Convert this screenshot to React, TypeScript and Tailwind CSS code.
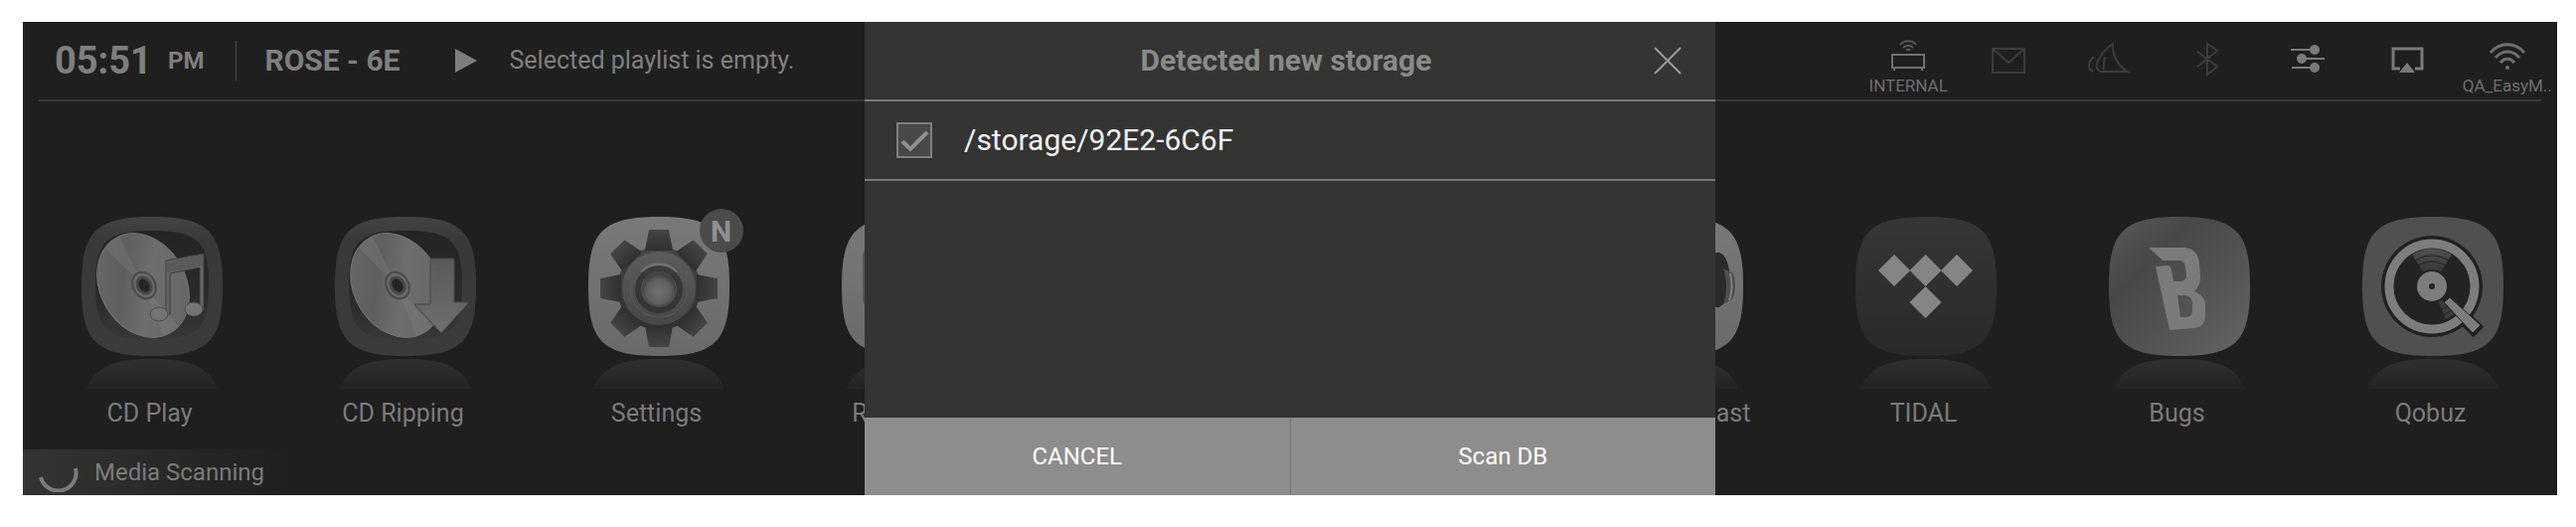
import * as React from 'react';
import clsx from 'clsx';

const SQUIRCLE = 'M0 70C0 16 13 0 71 0C129 0 142 16 142 70C142 124 129 140 71 140C13 140 0 124 0 70Z';

const Gradients = () => (
  <svg className="absolute w-0 h-0" aria-hidden="true">
    <defs>
      <linearGradient id="reflection" x1="0" y1="0" x2="0" y2="1">
        <stop offset="0" stopColor="#30302f" />
        <stop offset="1" stopColor="#232322" />
      </linearGradient>
      <linearGradient id="recess" x1="0" y1="0" x2="0" y2="1">
        <stop offset="0" stopColor="#242423" />
        <stop offset="0.6" stopColor="#2a2a29" />
        <stop offset="1" stopColor="#383836" />
      </linearGradient>
      <linearGradient id="frame" x1="0" y1="0" x2="0" y2="1">
        <stop offset="0" stopColor="#444442" />
        <stop offset="0.15" stopColor="#393937" />
        <stop offset="1" stopColor="#3b3b39" />
      </linearGradient>
      <linearGradient id="disc" x1="0" y1="0" x2="1" y2="1">
        <stop offset="0" stopColor="#6b6b69" />
        <stop offset="0.35" stopColor="#5f5f5d" />
        <stop offset="0.55" stopColor="#6e6e6c" />
        <stop offset="1" stopColor="#636361" />
      </linearGradient>
      <linearGradient id="metal" x1="0" y1="0" x2="0" y2="1">
        <stop offset="0" stopColor="#5a5a58" />
        <stop offset="1" stopColor="#6e6e6c" />
      </linearGradient>
      <linearGradient id="light" x1="0" y1="0" x2="0" y2="1">
        <stop offset="0" stopColor="#797977" />
        <stop offset="1" stopColor="#6a6a68" />
      </linearGradient>
      <linearGradient id="tidal" x1="0" y1="0" x2="0" y2="1">
        <stop offset="0" stopColor="#363634" />
        <stop offset="1" stopColor="#292929" />
      </linearGradient>
      <linearGradient id="bugs" x1="0" y1="0" x2="1" y2="1">
        <stop offset="0" stopColor="#5a5a59" />
        <stop offset="0.3" stopColor="#484847" />
        <stop offset="0.6" stopColor="#535352" />
        <stop offset="1" stopColor="#656564" />
      </linearGradient>
      <linearGradient id="gear" x1="0" y1="0" x2="0" y2="1">
        <stop offset="0" stopColor="#454543" />
        <stop offset="1" stopColor="#30302f" />
      </linearGradient>
      <linearGradient id="ring" x1="0" y1="0" x2="0" y2="1">
        <stop offset="0" stopColor="#5c5c5a" />
        <stop offset="1" stopColor="#464644" />
      </linearGradient>
      <radialGradient id="knob" cy="0.6">
        <stop offset="0" stopColor="#727270" />
        <stop offset="0.7" stopColor="#5f5f5d" />
        <stop offset="1" stopColor="#444442" />
      </radialGradient>
      <linearGradient id="vinyl" x1="0" y1="0" x2="0" y2="1">
        <stop offset="0" stopColor="#505050" />
        <stop offset="1" stopColor="#232323" />
      </linearGradient>
    </defs>
  </svg>
);

const TileIcon = ({ fill, children }: { fill: string; children?: React.ReactNode }) => (
  <svg className="block w-[146px] h-[176px]" viewBox="0 0 146 176" aria-hidden="true">
    <g transform="translate(4 0)">
      <path d="M5 173C14 150 34 143 71 143C108 143 128 150 137 173Z" fill="url(#reflection)" />
      <path d={SQUIRCLE} fill={fill} />
      {children}
    </g>
  </svg>
);

const Disc = () => (
  <>
    <path
      d="M14 68C14 24 26 14 71 14C116 14 128 24 128 68C128 114 116 124 71 124C26 124 14 114 14 68Z"
      fill="url(#recess)"
    />
    <g transform="rotate(-30 62 69)">
      <ellipse cx="62" cy="69" rx="43" ry="55" fill="url(#disc)" stroke="#747472" strokeWidth="1" />
      <path d="M62 69L48 18A43 55 0 0 1 66 14Z" fill="#737371" opacity="0.5" />
      <path d="M62 69L72 122A43 55 0 0 1 54 123Z" fill="#7a7a78" opacity="0.5" />
    </g>
    <g transform="rotate(-30 63 69)">
      <ellipse cx="63" cy="69" rx="11" ry="14" fill="#6a6a68" stroke="#4a4a49" strokeWidth="2" />
      <ellipse cx="63" cy="69" rx="8" ry="10" fill="#484847" />
      <ellipse cx="63" cy="69" rx="5" ry="7" fill="#252524" />
    </g>
  </>
);

const CdPlayIcon = () => (
  <TileIcon fill="url(#frame)">
    <Disc />
    <path d="M85 44L123 37V94H119V51L89 57V98H85Z" fill="#666664" stroke="#3c3c3b" strokeWidth="1" />
    <path d="M86 45L122 38V49L86 56Z" fill="#5a5a58" />
    <ellipse cx="78" cy="98" rx="9" ry="7" fill="#747472" stroke="#4a4a49" />
    <ellipse cx="113" cy="93" rx="9" ry="7" fill="#747472" stroke="#4a4a49" />
  </TileIcon>
);

const CdRippingIcon = () => (
  <TileIcon fill="url(#frame)">
    <Disc />
    <path d="M96 42H120V86H135L107 117L80 88H96Z" fill="url(#metal)" stroke="#484847" strokeWidth="1" />
  </TileIcon>
);

const SettingsIcon = () => (
  <TileIcon fill="url(#light)">
    <g fill="url(#gear)">
      <circle cx="71" cy="72" r="42" />
      {[0, 45, 90, 135, 180, 225, 270, 315].map((angle) => (
        <path key={angle} d="M57 34L61 13H81L85 34Z" transform={`rotate(${angle} 71 72)`} />
      ))}
    </g>
    <circle cx="71" cy="72" r="37" fill="url(#ring)" />
    <circle cx="71" cy="72" r="29" fill="none" stroke="#595957" strokeWidth="1" />
    <path d="M52 55A25 25 0 0 1 90 55L82 58A17 17 0 0 0 60 58Z" fill="#71716f" />
    <circle cx="71" cy="73" r="21" fill="none" stroke="#30302f" strokeWidth="6" opacity="0.8" />
    <circle cx="71" cy="72" r="17" fill="url(#knob)" />
  </TileIcon>
);

const TubeIcon = () => (
  <TileIcon fill="url(#light)">
    <rect x="21" y="28" width="100" height="66" rx="12" fill="#555553" />
  </TileIcon>
);

const PodcastIcon = () => (
  <TileIcon fill="url(#light)">
    <path d="M116 36C122 36 126 42 128 54C131 72 128 84 118 91H110V36Z" fill="#2a2a29" />
    <path d="M122 52L132 57C135 66 134 78 131 83L122 88C126 76 126 64 122 52Z" fill="#4e4e4c" />
    <path d="M129 57C131 66 131 76 128 84" fill="none" stroke="#81817f" strokeWidth="2" />
  </TileIcon>
);

const TidalIcon = () => (
  <TileIcon fill="url(#tidal)">
    <g fill="#858584">
      <path d="M39 38L55 54L39 70L23 54Z" />
      <path d="M70.500 38L86.500 54L70.500 70L54.500 54Z" />
      <path d="M102 38L118 54L102 70L86 54Z" />
      <path d="M70.500 70L86.500 86L70.500 102L54.500 86Z" />
    </g>
  </TileIcon>
);

const BugsIcon = () => (
  <TileIcon fill="url(#bugs)">
    <path
      fillRule="evenodd"
      fill="#7b7b7a"
      d="M40 31H74C85 31 90 37 91 47L92 60C92 67 90 71 86 75C93 78 97 82 97 89V99C97 108 93 111 85 112L61 114L47 50L57 49C61 49 62 50 63 54L65 65H71C76 65 78 63 78 58L77 51C76 46 75 44 70 44H54ZM69 79L72 101H77C82 101 84 99 84 94V88C84 82 81 79 76 79Z"
    />
  </TileIcon>
);

const QobuzIcon = () => (
  <TileIcon fill="#50504f">
    <path d="M86 85L117 116" stroke="#212121" strokeWidth="15" />
    <circle cx="70" cy="70" r="51" fill="#212121" />
    <circle cx="70" cy="70" r="43" fill="#232323" stroke="#7d7d7c" strokeWidth="9" />
    <path d="M70 70L50 38A38 38 0 0 1 90 38Z" fill="url(#vinyl)" />
    <path d="M70 70L84 103A36 36 0 0 0 92 98Z" fill="#3c3c3c" />
    <circle cx="70" cy="70" r="25" fill="none" stroke="#232323" strokeWidth="1" />
    <circle cx="70" cy="70" r="31" fill="none" stroke="#232323" strokeWidth="1" />
    <circle cx="70" cy="70" r="17" fill="#232323" />
    <circle cx="70" cy="70" r="9" fill="#232323" stroke="#7d7d7c" strokeWidth="12" />
    <path d="M82 86L111 117L119 109L88 81Z" fill="#7d7d7c" stroke="#212121" strokeWidth="1" />
  </TileIcon>
);

const APPS = [
  { label: 'CD Play', Icon: CdPlayIcon },
  { label: 'CD Ripping', Icon: CdRippingIcon },
  { label: 'Settings', Icon: SettingsIcon, badge: 'N' },
  { label: 'Rose Tube', Icon: TubeIcon },
  { label: 'Apple Podcast', Icon: PodcastIcon, className: 'col-start-7' },
  { label: 'TIDAL', Icon: TidalIcon },
  { label: 'Bugs', Icon: BugsIcon },
  { label: 'Qobuz', Icon: QobuzIcon }
];

const StatusIcon = ({ label, className, children }: { label?: string; className: string; children: React.ReactNode }) => (
  <li className={clsx('flex flex-col items-center', className)}>
    <svg className="w-11 h-10" viewBox="0 0 44 40" fill="none" stroke="currentColor" strokeWidth="2" aria-hidden="true">
      {children}
    </svg>
    {label && <span className="text-[17px] leading-4 whitespace-nowrap">{label}</span>}
  </li>
);

const StatusBar = () => (
  <header className="mx-4 h-20 flex flex-row justify-between border-b-2 border-[#3a3a3a]">
    <div className="flex flex-row items-center pl-4 text-[#7f7f7f]">
      <div className="flex flex-row items-center gap-4">
        <span className="text-[38px] leading-10 font-bold">05:51</span>
        <span className="text-2xl font-bold">PM</span>
      </div>
      <div className="w-px h-10 ml-8 mr-7 bg-[#4a4a4a]" />
      <span className="text-[30px] leading-10 font-bold">ROSE - 6E</span>
      <svg className="w-[22px] h-6 ml-14 mr-8" viewBox="0 0 22 24" fill="currentColor" aria-hidden="true">
        <path d="M0 0L22 12L0 24Z" />
      </svg>
      <span className="text-[25px] leading-10">Selected playlist is empty.</span>
    </div>

    {/* Status icons */}
    <ul className="grid grid-cols-7 w-[703px] -mr-4 pt-4">
      <StatusIcon label="INTERNAL" className="text-[#6e6e6e]">
        <path d="M6 17H38V30H6ZM8 30V33M36 30V33" />
        <path d="M14 7C18 2 26 2 30 7M17 10C20 7 24 7 27 10M20 12H24" strokeWidth="2" opacity="0.7" />
      </StatusIcon>
      <StatusIcon className="text-[#3c3c3c]">
        <path d="M6 11H38V35H6ZM6 11L22 25L38 11" />
      </StatusIcon>
      <StatusIcon className="text-[#3c3c3c]">
        <path d="M7 34C1 31 2 24 8 19M14 34C8 30 11 24 15 18C18 13 23 9 27 6C26 18 32 27 41 34H14M17 32C19 28 17 24 19 19" />
      </StatusIcon>
      <StatusIcon className="text-[#3c3c3c]">
        <path d="M12 14L32 29L22 37V6L32 13L12 29" />
      </StatusIcon>
      <StatusIcon className="text-[#7a7a7a]">
        <path d="M5 12H24M20 21H39M6 30H24" />
        <g fill="currentColor" stroke="none">
          <circle cx="29" cy="12" r="5" />
          <circle cx="16" cy="21" r="5" />
          <circle cx="29" cy="30" r="5" />
        </g>
      </StatusIcon>
      <StatusIcon className="text-[#7a7a7a]">
        <path d="M15 31H8V11H37V31H30" strokeWidth="3" />
        <path d="M22 25L30 35H14Z" fill="currentColor" stroke="none" />
      </StatusIcon>
      <StatusIcon label="QA_EasyM.." className="text-[#6e6e6e]">
        <g strokeWidth="3">
          <path d="M5 15C14 4 30 4 39 15M10 20C17 12 27 12 34 20M15 25C19 20 25 20 29 25" />
        </g>
        <circle cx="22" cy="30" r="2" fill="currentColor" stroke="none" />
      </StatusIcon>
    </ul>
  </header>
);

const StorageDialog = () => {
  const [checked, setChecked] = React.useState(true);

  return (
    <section
      role="dialog"
      aria-labelledby="dialog-title"
      className="absolute inset-y-0 left-1/2 w-[856px] max-w-full -translate-x-1/2 flex flex-col bg-[#343432]"
    >
      <div className="relative h-20 flex items-center justify-center pr-2 border-b-2 border-[#797979]">
        <h2 id="dialog-title" className="text-[30px] leading-10 font-bold text-[#8a8a8a]">Detected new storage</h2>
        <button aria-label="Close" className="absolute right-8 text-[#9a9a9a]">
          <svg className="w-8 h-8" viewBox="0 0 32 32" stroke="currentColor" strokeWidth="2">
            <path d="M3 3L29 29M29 3L3 29" />
          </svg>
        </button>
      </div>
      <label className="h-20 flex items-center gap-8 pl-8 border-b-2 border-[#797979] text-[30px] leading-10 text-[#f2f2f2]">
        <span className="relative w-9 h-9">
          <input
            type="checkbox"
            checked={checked}
            onChange={() => setChecked(!checked)}
            className="block w-9 h-9 appearance-none border-2 border-[#808080] bg-[#484847]"
          />
          {checked && (
            <svg className="absolute inset-0 w-9 h-9 pointer-events-none" viewBox="0 0 36 36" fill="none" stroke="#8f8f8f" strokeWidth="4">
              <path d="M6 19L14 27L31 10" />
            </svg>
          )}
        </span>
        /storage/92E2-6C6F
      </label>
      <div className="mt-auto h-[78px] flex flex-row bg-[#8d8d8d] text-2xl text-white">
        <button className="flex-1 border-r border-[#757575]">CANCEL</button>
        <button className="flex-1">Scan DB</button>
      </div>
    </section>
  );
};

export default function App() {
  return (
    <div className="bg-white pt-[22px] pb-8 pl-[23px] pr-[19px] font-[Roboto,sans-serif]">
      <Gradients />
      <main className="relative overflow-hidden bg-[#1f1f1f]">
        <StatusBar />

        <nav className="grid grid-cols-10 pt-[116px] pb-5">
          {APPS.map(({ label, Icon, badge, className }) => (
            <button key={label} className={clsx('flex flex-col items-center text-[#7b7b7b]', className)}>
              <span className="relative">
                <Icon />
                {badge && (
                  <span className="absolute -top-2 -right-3.5 w-11 h-11 rounded-full bg-[#4b4b4a] flex items-center justify-center text-[30px] font-bold text-[#8f8f8f]">
                    {badge}
                  </span>
                )}
              </span>
              <span className="mt-1.5 text-[25px] leading-8">{label}</span>
            </button>
          ))}
        </nav>

        <div role="status" className="w-[270px] h-[46px] flex flex-row items-center gap-4 pl-4 bg-linear-to-r from-[#343431] to-[#1f1f1f] text-[#7b7b7b]">
          <svg className="w-10 h-10" viewBox="0 0 40 40" fill="none" stroke="currentColor" strokeWidth="4" aria-hidden="true">
            <path d="M2 25A18 18 0 0 0 37 16" />
          </svg>
          <span className="text-2xl whitespace-nowrap">Media Scanning</span>
        </div>

        <StorageDialog />
      </main>
    </div>
  );
}
